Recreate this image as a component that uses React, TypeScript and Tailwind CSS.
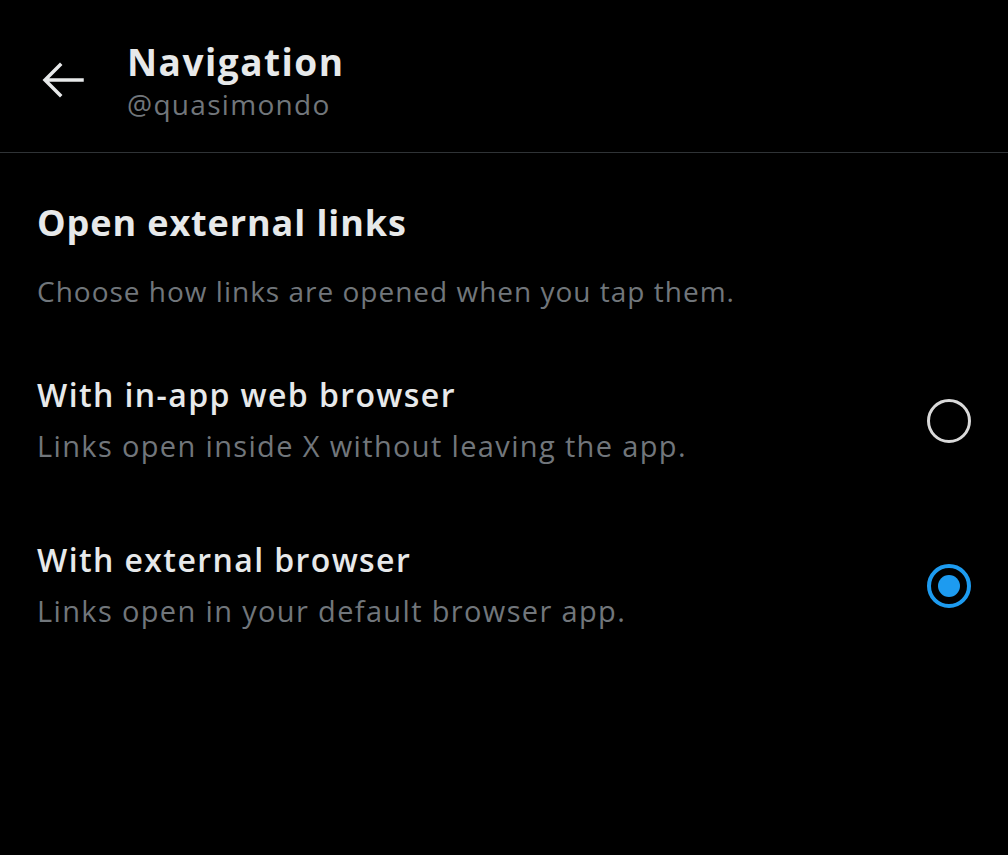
import React from "react";

const font = { fontFamily: "'Open Sans', 'Noto Sans', sans-serif" };

function Radio({ checked }: { checked: boolean }) {
  if (checked) {
    return (
      <div className="w-[44px] h-[44px] rounded-full border-[4px] border-[#1d9bf0] flex items-center justify-center">
        <div className="w-[22px] h-[22px] rounded-full bg-[#1d9bf0]" />
      </div>
    );
  }
  return <div className="w-[44px] h-[44px] rounded-full border-[3px] border-[#d9d9d9]" />;
}

function Option({ title, desc, checked }: { title: string; desc: string; checked: boolean }) {
  return (
    <div className="flex items-center justify-between pl-[37px] pr-[37px]">
      <div className="flex flex-col">
        <div className="text-[32px] leading-[48px] font-semibold tracking-[1.4px] text-[#e7e9ea]">{title}</div>
        <div className="mt-[3px] text-[29px] leading-[48px] tracking-[1.35px] text-[#71767b]">{desc}</div>
      </div>
      <Radio checked={checked} />
    </div>
  );
}

export default function App() {
  return (
    <div className="w-[1008px] h-[855px] bg-black overflow-hidden" style={font}>
      <div className="h-[153px] flex items-start border-b border-[#2f3336]">
        <div className="w-[127px] h-[153px] flex items-start pt-[62px] pl-[42px]">
          <svg width="42" height="36" viewBox="0 0 42 36" fill="none">
            <path d="M40 18H4M18 3L3 18l15 15" stroke="#e7e9ea" strokeWidth="3.5" strokeLinecap="square" />
          </svg>
        </div>
        <div className="flex flex-col pt-[38px]">
          <div className="text-[37px] leading-[48px] font-bold tracking-[1.5px] text-[#e7e9ea]">Navigation</div>
          <div className="text-[28px] leading-[36px] tracking-[1.3px] text-[#71767b]">@quasimondo</div>
        </div>
      </div>
      <div className="pl-[37px] pt-[46px]">
        <div className="text-[36px] leading-[48px] font-bold tracking-[0.9px] text-[#e7e9ea]">Open external links</div>
        <div className="mt-[22px] text-[28px] leading-[44px] tracking-[1px] text-[#71767b]">
          Choose how links are opened when you tap them.
        </div>
      </div>
      <div className="mt-[58px] flex flex-col gap-[66px]">
        <Option title="With in-app web browser" desc="Links open inside X without leaving the app." checked={false} />
        <Option title="With external browser" desc="Links open in your default browser app." checked={true} />
      </div>
    </div>
  );
}
